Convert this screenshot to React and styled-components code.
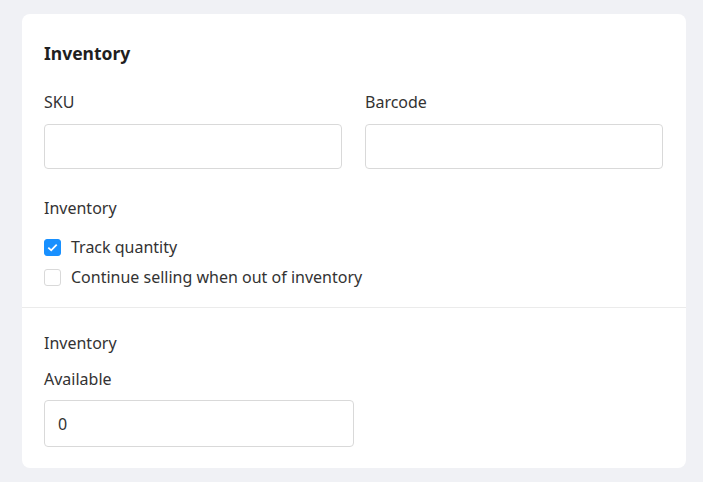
import React, { useState } from 'react';
import styled, { createGlobalStyle } from 'styled-components';

const GlobalStyle = createGlobalStyle`
  html, body {
    margin: 0;
    padding: 0;
    background: #f0f1f5;
    font-family: "Noto Sans", "Open Sans", sans-serif;
    color: #333;
  }
`;

const Page = styled.div`
  padding: 14px 17px 15px 22px;
`;

const Card = styled.div`
  background: #fff;
  border-radius: 8px;
  overflow: hidden;
`;

const Section = styled.div`
  padding: ${(p) => p.$pad};
  display: flex;
  flex-direction: column;
`;

const Title = styled.h2`
  margin: 0;
  font-size: 17.5px;
  font-weight: 700;
  color: #1f1f1f;
  line-height: 24px;
`;

const Row = styled.div`
  display: grid;
  grid-template-columns: 1fr 1fr;
  gap: 23px;
  margin-top: ${(p) => p.$mt || 0}px;
`;

const Field = styled.div`
  display: flex;
  flex-direction: column;
  width: ${(p) => p.$width || 'auto'};
`;

const Label = styled.label`
  font-size: 16px;
  line-height: 22px;
  color: #333;
  margin-top: ${(p) => p.$mt || 0}px;
  margin-bottom: ${(p) => p.$mb || 0}px;
`;

const Input = styled.input`
  box-sizing: border-box;
  height: ${(p) => p.$h || 45}px;
  border: 1px solid #d9d9d9;
  border-radius: 4px;
  padding: 0 13px;
  font-family: inherit;
  font-size: 16px;
  color: #333;
  outline: none;
  width: 100%;
`;

const CheckRow = styled.label`
  display: flex;
  align-items: center;
  gap: 10px;
  font-size: 16px;
  line-height: 22px;
  height: 30px;
  color: #333;
  cursor: pointer;
`;

const Box = styled.span`
  box-sizing: border-box;
  width: 17px;
  height: 17px;
  border-radius: 3px;
  border: 1px solid ${(p) => (p.$on ? '#1890ff' : '#d9d9d9')};
  background: ${(p) => (p.$on ? '#1890ff' : '#fff')};
  display: flex;
  align-items: center;
  justify-content: center;
`;

const Divider = styled.div`
  height: 1px;
  background: #ebebeb;
`;

const Checkbox = ({ checked, onChange, children }) => (
  <CheckRow onClick={onChange}>
    <Box $on={checked}>
      {checked && (
        <svg width="11" height="9" viewBox="0 0 11 9">
          <path d="M1.3 4.6 L4.2 7.3 L9.7 1.6" fill="none" stroke="#fff" strokeWidth="1.8" />
        </svg>
      )}
    </Box>
    {children}
  </CheckRow>
);

export default function App() {
  const [track, setTrack] = useState(true);
  const [cont, setCont] = useState(false);
  return (
    <Page>
      <GlobalStyle />
      <Card>
        <Section $pad="27px 23px 15px 22px">
          <Title>Inventory</Title>
          <Row $mt={26}>
            <Field>
              <Label $mb={11}>SKU</Label>
              <Input />
            </Field>
            <Field>
              <Label $mb={11}>Barcode</Label>
              <Input />
            </Field>
          </Row>
          <Label $mt={28} $mb={13}>Inventory</Label>
          <Checkbox checked={track} onChange={() => setTrack(!track)}>Track quantity</Checkbox>
          <Checkbox checked={cont} onChange={() => setCont(!cont)}>Continue selling when out of inventory</Checkbox>
        </Section>
        <Divider />
        <Section $pad="24px 23px 21px 22px">
          <Label>Inventory</Label>
          <Label $mt={14} $mb={10}>Available</Label>
          <Field $width="310px">
            <Input $h={47} defaultValue="0" />
          </Field>
        </Section>
      </Card>
    </Page>
  );
}
